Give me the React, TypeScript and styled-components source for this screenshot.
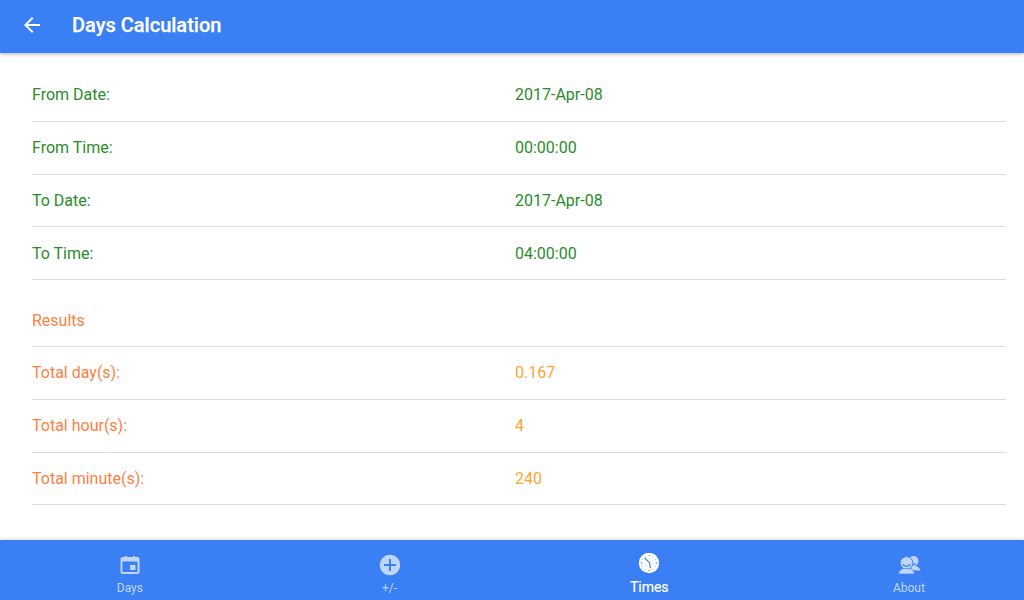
import React from "react";
import styled, { createGlobalStyle } from "styled-components";

const GlobalStyle = createGlobalStyle`
  html, body, #root {
    height: 100%;
    margin: 0;
  }
  body {
    font-family: Roboto, "Noto Sans", sans-serif;
    background: #fff;
  }
`;

const inputs = [
  { label: "From Date:", value: "2017-Apr-08" },
  { label: "From Time:", value: "00:00:00" },
  { label: "To Date:", value: "2017-Apr-08" },
  { label: "To Time:", value: "04:00:00" },
];

const results = [
  { label: "Total day(s):", value: "0.167" },
  { label: "Total hour(s):", value: "4" },
  { label: "Total minute(s):", value: "240" },
];

const BAR_BLUE = "#3b7ff5";

const CalendarIcon = () => (
  <svg width="24" height="24" viewBox="0 0 24 24" fill="currentColor">
    <path
      fillRule="evenodd"
      d="M7 3h2v1h6V3h2v1h2.500c1.100 0 2 .9 2 2v13c0 1.100-.9 2-2 2h-15c-1.100 0-2-.9-2-2V6c0-1.100.9-2 2-2H7V3zM4.500 8.500V19h15V8.500h-15zM12 12h5.500v5H12v-5z"
    />
  </svg>
);

const PlusCircleIcon = () => (
  <svg width="24" height="24" viewBox="0 0 24 24" fill="currentColor">
    <path
      fillRule="evenodd"
      d="M12 1.800C6.400 1.800 1.800 6.400 1.800 12S6.400 22.200 12 22.200 22.200 17.600 22.200 12 17.600 1.800 12 1.800zm1 11.200v5h-2v-5H6v-2h5V6h2v5h5v2h-5z"
    />
  </svg>
);

const ClockIcon = () => (
  <svg width="24" height="24" viewBox="0 0 24 24">
    <circle cx="12" cy="10" r="10.200" fill="currentColor" />
    <g fill={BAR_BLUE}>
      <circle cx="12" cy="2.600" r="0.700" />
      <circle cx="15.700" cy="3.600" r="0.450" />
      <circle cx="18.400" cy="6.300" r="0.450" />
      <circle cx="19.400" cy="10" r="0.700" />
      <circle cx="18.400" cy="13.700" r="0.450" />
      <circle cx="15.700" cy="16.400" r="0.450" />
      <circle cx="12" cy="17.400" r="0.700" />
      <circle cx="8.300" cy="16.400" r="0.450" />
      <circle cx="5.600" cy="13.700" r="0.450" />
      <circle cx="4.600" cy="10" r="0.700" />
      <circle cx="5.600" cy="6.300" r="0.450" />
      <circle cx="8.300" cy="3.600" r="0.450" />
    </g>
    <path d="M7.800 5l5 5.200.5 4.800" fill="none" stroke={BAR_BLUE} strokeWidth="1.200" />
  </svg>
);

const PeopleIcon = () => (
  <svg width="24" height="24" viewBox="0 0 24 24" fill="currentColor">
    <circle cx="16.500" cy="8" r="5" />
    <path d="M14 13h5c2.500.8 4 2.300 4.300 4.500H16l-3-3z" />
    <path d="M12 10.500c1.500 1.500 4.500 1.500 6.500 0" fill="none" stroke={BAR_BLUE} strokeWidth="1.100" />
    <circle cx="9.500" cy="10" r="6.400" stroke={BAR_BLUE} strokeWidth="1" />
    <path d="M6.500 15.500h6c3 .8 4.700 2.400 5 5.500H1.500c.3-3.100 2-4.700 5-5.500z" stroke={BAR_BLUE} strokeWidth="0.600" />
    <path d="M5.500 11.200c1.500 2.700 6.500 2.700 8 0" fill="none" stroke={BAR_BLUE} strokeWidth="1.300" />
  </svg>
);

const tabs = [
  { label: "Days", icon: <CalendarIcon />, active: false },
  { label: "+/-", icon: <PlusCircleIcon />, active: false },
  { label: "Times", icon: <ClockIcon />, active: true },
  { label: "About", icon: <PeopleIcon />, active: false },
];

const App: React.FC = () => {
  return (
    <Page>
      <GlobalStyle />
      <Header>
        <BackButton aria-label="Back">
          <svg width="24" height="24" viewBox="0 0 24 24" fill="currentColor">
            <path d="M20 11H7.830l5.590-5.590L12 4l-8 8 8 8 1.410-1.410L7.830 13H20v-2z" />
          </svg>
        </BackButton>
        <Title>Days Calculation</Title>
      </Header>
      <Content>
        <Section>
          {inputs.map((row) => (
            <Row key={row.label}>
              <Label $color="#2a8c2a">{row.label}</Label>
              <Value $color="#2a8c2a">{row.value}</Value>
            </Row>
          ))}
        </Section>
        <Section $offset>
          <Row>
            <Label $color="#ff7f3f">Results</Label>
          </Row>
          {results.map((row) => (
            <Row key={row.label}>
              <Label $color="#ff7f3f">{row.label}</Label>
              <Value $color="#ffa533">{row.value}</Value>
            </Row>
          ))}
        </Section>
      </Content>
      <TabBar>
        {tabs.map((tab) => (
          <Tab key={tab.label} $active={tab.active}>
            <TabIcon>{tab.icon}</TabIcon>
            <TabLabel $active={tab.active}>{tab.label}</TabLabel>
          </Tab>
        ))}
      </TabBar>
    </Page>
  );
};

export default App;

const Page = styled.div`
  width: 1024px;
  height: 600px;
  display: flex;
  flex-direction: column;
  overflow: hidden;
`;

const Header = styled.header`
  height: 53px;
  box-sizing: border-box;
  padding-bottom: 4px;
  flex-shrink: 0;
  display: flex;
  align-items: center;
  background-color: ${BAR_BLUE};
  color: #fff;
  box-shadow: 0 1px 4px rgba(0, 0, 0, 0.3);
  position: relative;
`;

const BackButton = styled.div`
  width: 72px;
  padding-left: 20px;
  box-sizing: border-box;
  display: flex;
  align-items: center;
`;

const Title = styled.h1`
  margin: 0;
  font-size: 20px;
  font-weight: 500;
  -webkit-text-stroke: 0.25px #fff;
`;

const Content = styled.main`
  flex: 1;
  padding: 16px 18px 0 32px;
`;

const Section = styled.section<{ $offset?: boolean }>`
  margin-top: ${(p) => (p.$offset ? "14px" : "0")};
`;

const Row = styled.div`
  height: 52.8px;
  box-sizing: border-box;
  display: flex;
  align-items: center;
  border-bottom: 1px solid #dddddd;
`;

const Label = styled.div<{ $color: string }>`
  width: 483px;
  font-size: 16px;
  color: ${(p) => p.$color};
`;

const Value = styled.div<{ $color: string }>`
  font-size: 16px;
  color: ${(p) => p.$color};
`;

const TabBar = styled.nav`
  height: 60px;
  flex-shrink: 0;
  display: grid;
  grid-template-columns: repeat(4, 259.7px);
  background-color: ${BAR_BLUE};
  box-shadow: 0 -1px 3px rgba(0, 0, 0, 0.15);
`;

const Tab = styled.div<{ $active: boolean }>`
  display: flex;
  flex-direction: column;
  align-items: center;
  padding-top: 13px;
  color: ${(p) => (p.$active ? "#ffffff" : "#bfd6fb")};
`;

const TabIcon = styled.div`
  height: 24px;
  display: flex;
`;

const TabLabel = styled.span<{ $active: boolean }>`
  margin-top: 3px;
  font-size: ${(p) => (p.$active ? "14px" : "12px")};
  line-height: ${(p) => (p.$active ? "14px" : "16px")};
  -webkit-text-stroke: ${(p) => (p.$active ? "0.2px #fff" : "0")};
`;
